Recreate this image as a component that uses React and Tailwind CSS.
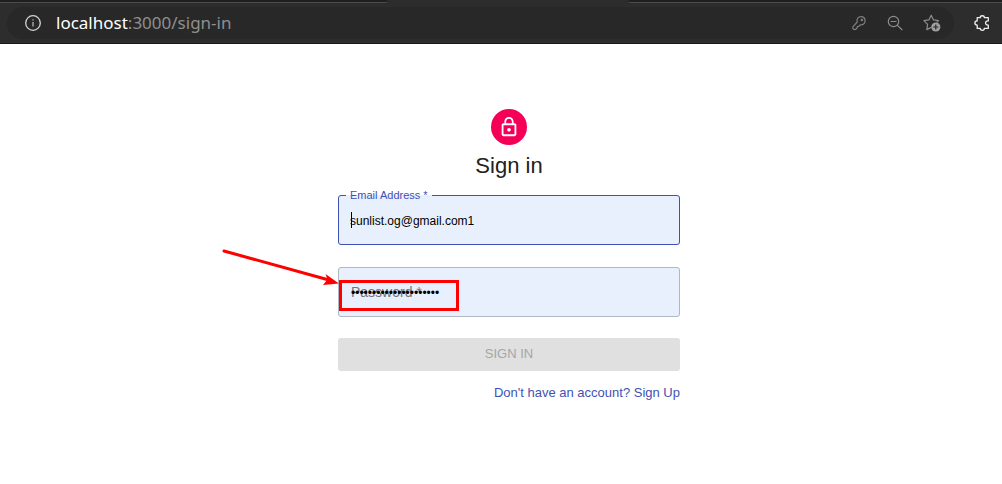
function InfoIcon() {
  return (
    <svg className="size-4" viewBox="0 0 16 16" fill="none" stroke="#d6d6d6" strokeWidth="1.3" aria-hidden="true">
      <circle cx="8" cy="8" r="7.3" />
      <path d="M8 7v4.5" stroke="#b5b5b5" />
      <path d="M8 4.2v1.4" stroke="#b5b5b5" />
    </svg>
  );
}

function KeyIcon() {
  return (
    <svg className="size-4" viewBox="0 0 16 16" fill="none" stroke="#7d7d7d" strokeWidth="1.2" strokeLinejoin="round" aria-hidden="true">
      <path d="M6.200 7C5.400 4 7.300 1.700 9.900 1.700c2.500 0 4.200 1.800 4.200 4.200 0 2.700-2.300 4.400-4.900 3.900l-1.600 1.700-1.300.2-.2 1.300-1.600 1.500c-1.700.5-3.200-1-2.600-2.600z" />
      <circle cx="10.900" cy="5" r=".7" />
    </svg>
  );
}

function ZoomOutIcon() {
  return (
    <svg className="size-4" viewBox="0 0 16 16" fill="none" stroke="#8c8c8c" strokeWidth="1.2" strokeLinecap="round" aria-hidden="true">
      <circle cx="6.500" cy="6.500" r="5.200" />
      <path d="M4 6.500h5M10.400 10.400l4.600 4.300" />
    </svg>
  );
}

function StarPlusIcon() {
  return (
    <svg className="h-[18px] w-[18px]" viewBox="0 0 18 18" fill="none" aria-hidden="true">
      <path
        d="M7.600 13.600l-3.800 2 .8-5.200L.9 6.700l5-.8L8.200 1.200l2.300 4.700 5 .8-1.500 1.500"
        stroke="#8c8c8c"
        strokeWidth="1.200"
        strokeLinejoin="round"
        strokeLinecap="round"
      />
      <circle cx="12.800" cy="13" r="4.600" fill="#a0a0a0" />
      <path d="M12.800 10.400v5.200M10.200 13h5.200" stroke="#282828" strokeWidth="1.200" />
    </svg>
  );
}

function PuzzleIcon() {
  return (
    <svg className="size-4" viewBox="0 0 16 16" fill="none" stroke="#f0f0f0" strokeWidth="1.300" strokeLinejoin="round" aria-hidden="true">
      <path d="M3.200 2.600h3C6.300.1 10.300.1 10.400 2.600h3.900v3.300c-3.700-.3-3.700 4.500 0 4.200v3.300h-3.900c-.1 2.500-4.100 2.500-4.200 0h-3v-3.300C.1 10 .1 6 3.200 5.900z" />
    </svg>
  );
}

function LockIcon() {
  return (
    <svg className="size-[22px]" viewBox="0 0 24 24" fill="#fff" aria-hidden="true">
      <path d="M12 17c1.100 0 2-.9 2-2s-.9-2-2-2-2 .9-2 2 .9 2 2 2zm6-9h-1V6c0-2.760-2.240-5-5-5S7 3.240 7 6v2H6c-1.100 0-2 .9-2 2v10c0 1.100.9 2 2 2h12c1.100 0 2-.9 2-2V10c0-1.100-.9-2-2-2zM8.900 6c0-1.710 1.390-3.100 3.100-3.100s3.100 1.390 3.100 3.100v2H8.900V6zM18 20H6V10h12v10z" />
    </svg>
  );
}

function BrowserBar() {
  return (
    <header className="border-b border-[#1b1719] bg-[#2d2d2d]">
      <div className="flex h-[3px] justify-between">
        <div className="w-[388px] rounded-br-sm border-b border-[#4c4c4c] bg-[#1f1f1f]" />
        <div className="w-[374px] rounded-bl-sm border-b border-[#4c4c4c] bg-[#1f1f1f]" />
      </div>
      <div className="flex items-center gap-5 py-1 pr-3 pl-[7px]">
        <div className="flex h-8 min-w-0 flex-1 items-center rounded-full bg-[#282828] pr-[13px] pl-[18px]">
          <button type="button" aria-label="Site information">
            <InfoIcon />
          </button>
          <div className="ml-[15px] flex-1 font-['Noto_Sans',sans-serif] text-[17px] leading-6 text-[#8f8f8f]">
            <span className="text-white">localhost</span>:3000/sign-in
          </div>
          <div className="flex items-center gap-5">
            <button type="button" aria-label="Passwords">
              <KeyIcon />
            </button>
            <button type="button" aria-label="Zoom out">
              <ZoomOutIcon />
            </button>
            <button type="button" aria-label="Add to favorites">
              <StarPlusIcon />
            </button>
          </div>
        </div>
        <button type="button" aria-label="Extensions">
          <PuzzleIcon />
        </button>
      </div>
    </header>
  );
}

export default function App() {
  return (
    <div className="min-h-screen bg-white font-['Liberation_Sans',Arial,sans-serif]">
      <BrowserBar />
      <main className="pt-[65px] pl-4">
        <div className="mx-auto flex w-full max-w-[342px] flex-col">
          <div className="flex size-9 items-center justify-center self-center rounded-full bg-[#f50057]">
            <LockIcon />
          </div>
          <h1 className="mt-1.5 text-center text-[22px] leading-[30px] text-[#212121]">Sign in</h1>

          <form className="mt-2 flex flex-col" onSubmit={(e) => e.preventDefault()}>
            <fieldset className="relative min-w-0 rounded-[3px] border border-[#3f51b5] bg-[#e8f0fe] pb-[3px] pl-[7px]">
              <legend className="px-1 text-[11px] leading-3 text-[#3f51b5]">
                <label htmlFor="email">Email Address *</label>
              </legend>
              <input
                id="email"
                type="email"
                defaultValue="sunlist.og@gmail.com1"
                className="block h-10 w-full bg-transparent pl-1 text-xs text-black outline-none"
              />
              <span className="absolute top-[11px] left-3 h-4 w-px bg-black" />
            </fieldset>

            <div className="relative mt-[22px] rounded-[3px] border border-[#b0b6c2] bg-[#e8f0fe]">
              <label htmlFor="password" className="absolute inset-y-0 left-3 flex items-center text-sm text-[#757575]">
                Password *
              </label>
              <input
                id="password"
                type="password"
                defaultValue="aaaaaaaaaaaaaaaaaaaaa"
                className="relative block h-12 w-full bg-transparent px-3 pt-0.5 text-xs text-black outline-none"
              />
              <div className="pointer-events-none absolute top-3 left-0 h-[31px] w-[120px] border-3 border-[#fe0000]" />
              <svg className="pointer-events-none absolute -top-[20px] -left-[117px] h-10 w-[118px]" viewBox="0 0 118 40" aria-hidden="true">
                <path d="M2 3L107 32" stroke="#fe0000" strokeWidth="3" strokeLinecap="round" />
                <path d="M117 35.500L101 37L105.500 31.500L103.500 26z" fill="#fe0000" />
              </svg>
            </div>

            <button
              type="submit"
              disabled
              className="mt-[21px] h-[33px] rounded-[3px] bg-[#e0e0e0] pb-0.5 text-[13px] text-[#a6a6a6]"
            >
              SIGN IN
            </button>
          </form>

          <a href="#sign-up" className="mt-3 self-end text-[13px] leading-5 text-[#3f51b5]">
            Don't have an account? Sign Up
          </a>
        </div>
      </main>
    </div>
  );
}
